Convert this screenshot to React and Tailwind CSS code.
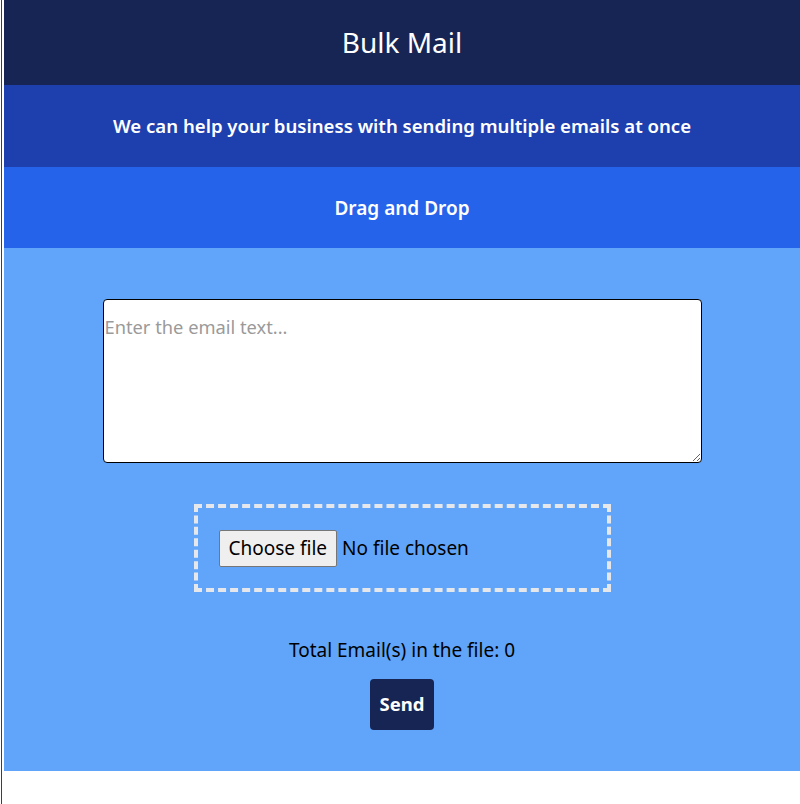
import React, { useState } from "react";

const App = () => {
  const [text, setText] = useState("");
  const [emails] = useState([]);

  return (
    <div className="min-h-screen ml-px border-l border-[#3f3f3f] pl-[2px] bg-white font-['Noto_Sans',sans-serif]">
      {/* header */}
      <div className="h-[85px] bg-[#172554] text-white flex items-center justify-center">
        <h1 className="text-[28px] pb-[2px]">Bulk Mail</h1>
      </div>

      <div className="h-[82px] bg-[#1e40af] text-white flex items-center justify-center">
        <h2 className="text-[18.6px] font-semibold">We can help your business with sending multiple emails at once</h2>
      </div>

      <div className="h-[81px] bg-[#2563eb] text-white flex items-center justify-center">
        <h2 className="text-[19px] font-semibold pt-[2px]">Drag and Drop</h2>
      </div>

      {/* main */}
      <div className="bg-[#60a5fa] flex flex-col items-center pt-[51px] pb-[41px]">
        <textarea
          value={text}
          onChange={(e) => setText(e.target.value)}
          placeholder="Enter the email text..."
          className="w-[599px] h-[164px] bg-white border border-black rounded-[4px] px-[1px] pt-[13px] text-[18.3px] text-black placeholder:text-[#9a9a9a] outline-none"
        ></textarea>

        <div className="mt-[41px] w-[417px] h-[88px] border-4 border-dashed border-[#e5e7eb] flex items-center px-[21px]">
          <span className="h-[37px] px-[9px] flex items-center bg-[#efefef] border border-[#767676] rounded-[2px] text-[19px] text-black">
            Choose file
          </span>
          <span className="ml-[5px] text-[19px] text-black">No file chosen</span>
        </div>

        <p className="mt-[44px] text-[19px] text-black">Total Email(s) in the file: {emails.length}</p>

        <button className="mt-[14px] h-[51px] px-[10px] bg-[#172554] text-white text-[18.5px] font-bold rounded-[4px]">
          Send
        </button>
      </div>
    </div>
  );
};

export default App;
